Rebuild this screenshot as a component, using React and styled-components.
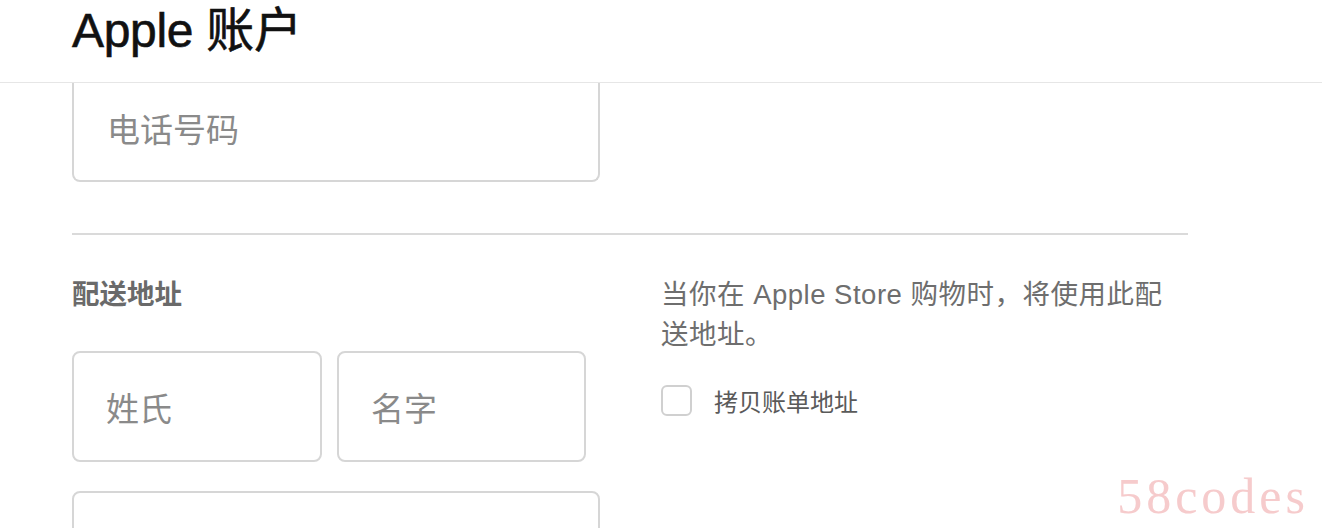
import React from 'react'
import styled, { createGlobalStyle } from 'styled-components'

const GlobalStyle = createGlobalStyle`
  html, body {
    margin: 0;
    padding: 0;
    background: #fff;
    font-family: "Liberation Sans", "Noto Sans CJK SC", sans-serif;
    overflow: hidden;
  }
`

function App() {
  return (
    <>
      <GlobalStyle />
      <Page>
        <Header>
          <Title>Apple 账户</Title>
        </Header>
        <Content>
          <PhoneField>
            <Placeholder>电话号码</Placeholder>
          </PhoneField>
          <Divider />
          <Section>
            <LeftCol>
              <Label>配送地址</Label>
              <NameRow>
                <Field height="111px">
                  <Placeholder>姓氏</Placeholder>
                </Field>
                <Field height="111px">
                  <Placeholder>名字</Placeholder>
                </Field>
              </NameRow>
              <Field height="111px" />
            </LeftCol>
            <RightCol>
              <Description>当你在 Apple Store 购物时，将使用此配送地址。</Description>
              <CheckRow>
                <CheckBox />
                <CheckLabel>拷贝账单地址</CheckLabel>
              </CheckRow>
            </RightCol>
          </Section>
        </Content>
        <Watermark>58codes</Watermark>
      </Page>
    </>
  )
}

const Page = styled.div`
  position: relative;
  width: 1322px;
  height: 528px;
  overflow: hidden;
`

const Header = styled.header`
  height: 82px;
  border-bottom: 1px solid #e6e6e6;
  padding: 0 72px;
  box-sizing: content-box;
`

const Title = styled.h1`
  margin: 0;
  padding-top: 7px;
  font-size: 48px;
  line-height: 48px;
  font-weight: 400;
  color: #111;
  -webkit-text-stroke: 0.6px #111;
  letter-spacing: -0.3px;
`

const Content = styled.main`
  width: 1116px;
  margin: 0 72px;
`

const Field = styled.div`
  box-sizing: border-box;
  height: ${p => p.height};
  border: 2px solid #d6d6d6;
  border-radius: 8px;
  padding-left: 32px;
  display: flex;
  align-items: center;
  background: #fff;
`

const PhoneField = styled(Field)`
  width: 528px;
  height: 99px;
  border-top: none;
  border-radius: 0 0 8px 8px;
  padding-left: 33px;
  padding-bottom: 8px;
`

const Placeholder = styled.span`
  font-size: 33px;
  color: #8a8a8a;
`

const Divider = styled.hr`
  margin: 51px 0 0;
  border: none;
  border-top: 2px solid #dadada;
`

const Section = styled.section`
  display: grid;
  grid-template-columns: 528px 527px;
  column-gap: 61px;
  padding-top: 40px;
`

const LeftCol = styled.div`
  display: flex;
  flex-direction: column;
  gap: 29px;
`

const Label = styled.h2`
  margin: 0 0 7px;
  font-size: 27.5px;
  line-height: 40px;
  font-weight: 700;
  color: #6a6a6a;
`

const NameRow = styled.div`
  display: grid;
  grid-template-columns: 250px 249px;
  column-gap: 15px;
`

const RightCol = styled.div`
  display: flex;
  flex-direction: column;
`

const Description = styled.p`
  margin: 0;
  max-width: 512px;
  font-size: 27.5px;
  line-height: 40px;
  letter-spacing: 0.5px;
  color: #6e6e6e;
`

const CheckRow = styled.label`
  display: flex;
  align-items: center;
  gap: 22px;
  margin-top: 28px;
`

const CheckBox = styled.span`
  box-sizing: border-box;
  width: 31px;
  height: 31px;
  border: 2px solid #d0d0d0;
  border-radius: 6px;
  background: #fff;
`

const CheckLabel = styled.span`
  font-size: 24px;
  color: #5a5a5a;
`

const Watermark = styled.div`
  position: absolute;
  right: 13px;
  bottom: 3px;
  font-family: "Liberation Serif", serif;
  font-size: 50px;
  letter-spacing: 4px;
  color: #f6cbcc;
`

export default App
